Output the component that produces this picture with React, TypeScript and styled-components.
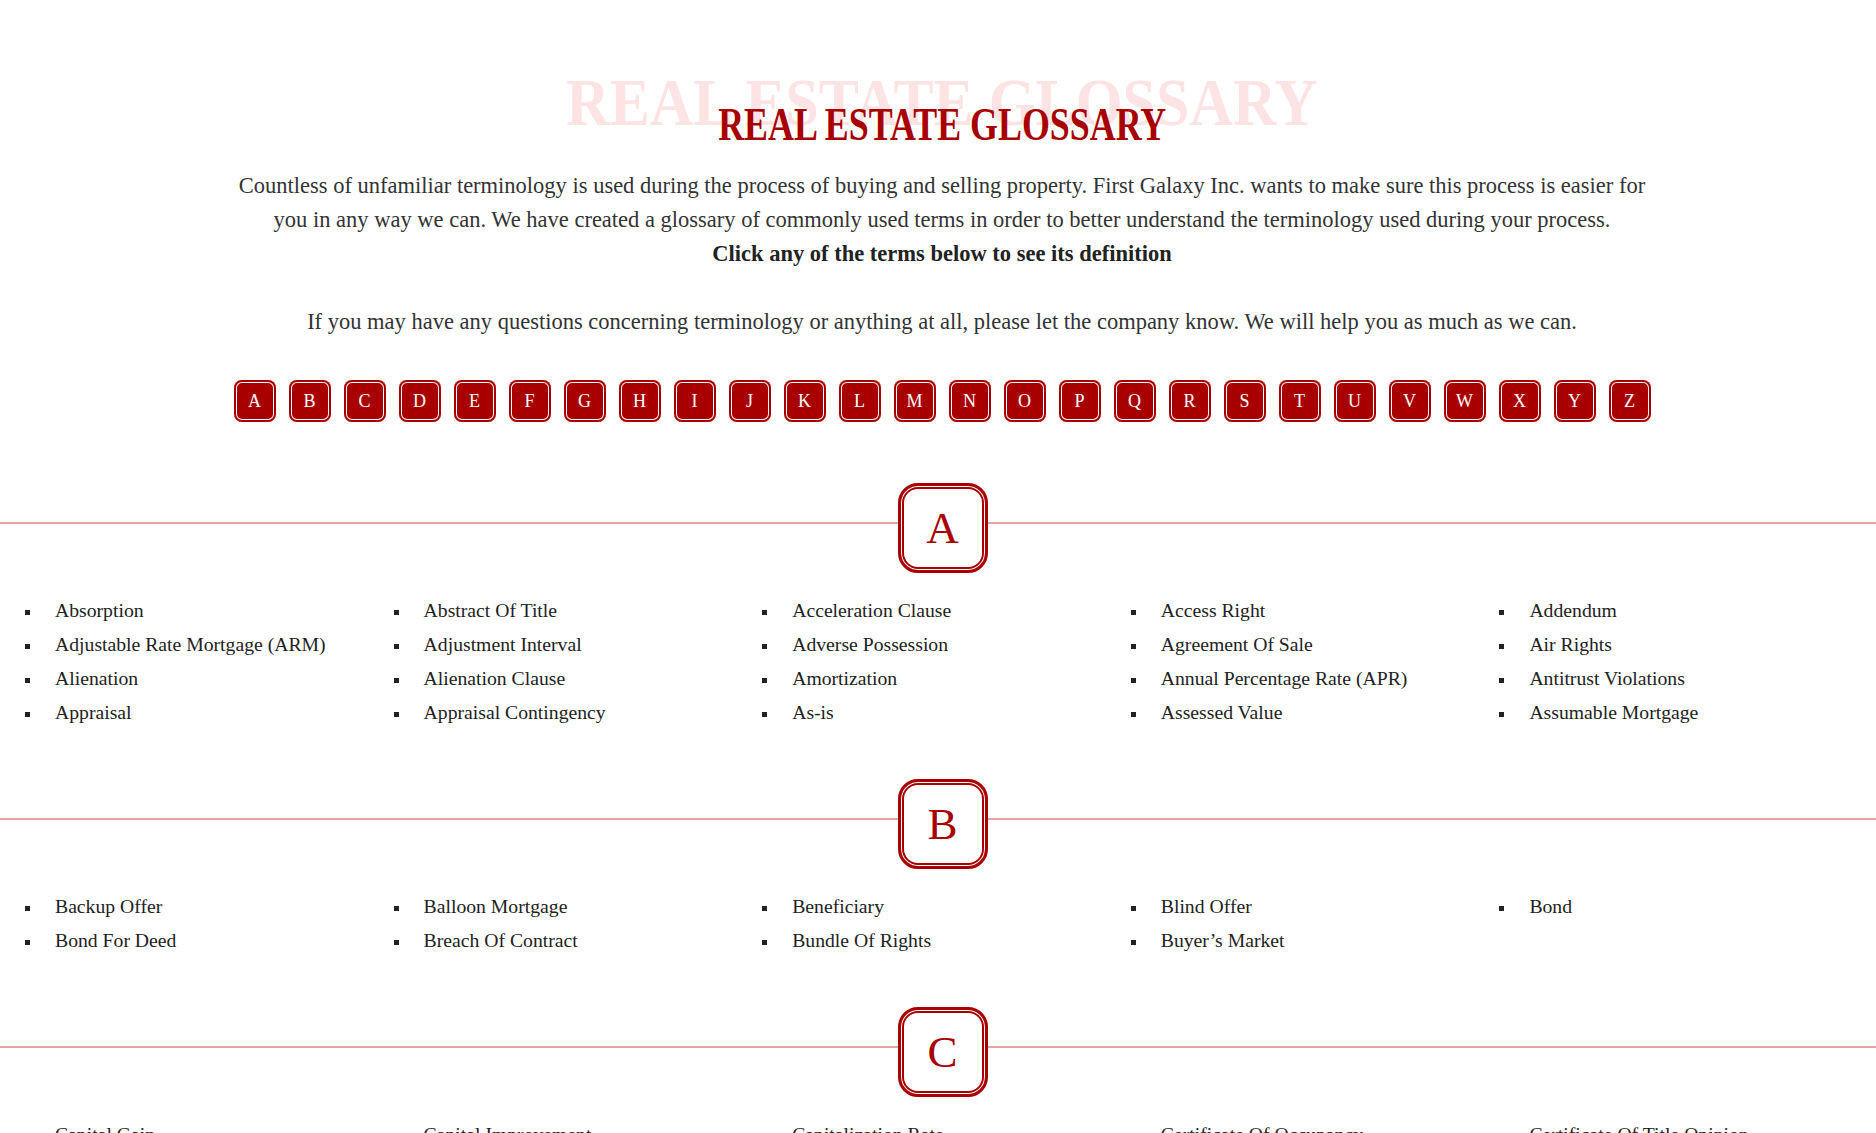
import React from "react";
import styled, { createGlobalStyle } from "styled-components";

const RED = "#a80000";

const GlobalStyle = createGlobalStyle`
  html, body {
    margin: 0;
    padding: 0;
    background: #ffffff;
  }
  body {
    font-family: "Liberation Serif", "Times New Roman", serif;
    color: #333;
  }
  * { box-sizing: border-box; }
`;

const Page = styled.div`
  width: 100%;
  padding-bottom: 60px;
`;

const Header = styled.header`
  padding: 99px 0 0 8px;
  text-align: center;
`;

const TitleWrap = styled.div`
  position: relative;
  height: 52px;
`;

const GhostTitle = styled.span`
  position: absolute;
  left: 0;
  right: 0;
  top: -31px;
  font-size: 68px;
  line-height: 68px;
  font-weight: 700;
  color: #fde3e3;
  white-space: nowrap;
  transform: scaleX(0.885);
  z-index: 0;
`;

const Title = styled.h1`
  position: relative;
  z-index: 1;
  display: inline-block;
  margin: 0;
  font-size: 46px;
  line-height: 52px;
  font-weight: 700;
  color: ${RED};
  white-space: nowrap;
  transform: scaleX(0.78);
`;

const Intro = styled.p`
  max-width: 1415px;
  margin: 18px auto 0;
  font-size: 22.5px;
  line-height: 34px;
  color: #333;
`;

const Strong = styled.strong`
  display: block;
  font-weight: 700;
  color: #222;
`;

const Note = styled(Intro)`
  max-width: 1500px;
  margin-top: 34px;
`;

const LetterBar = styled.nav`
  display: flex;
  justify-content: center;
  gap: 13px;
  margin-top: 41px;
`;

const LetterButton = styled.a`
  width: 42px;
  height: 42px;
  display: flex;
  align-items: center;
  justify-content: center;
  border-radius: 8px;
  background: ${RED};
  box-shadow: inset 0 0 0 2px ${RED}, inset 0 0 0 3px #ffffff;
  color: #ffffff;
  font-size: 18px;
  text-decoration: none;
  cursor: pointer;
`;

const Sections = styled.main`
  display: flex;
  flex-direction: column;
  gap: 50px;
  margin-top: 61px;
`;

const Section = styled.section``;

const Divider = styled.div`
  position: relative;
  display: flex;
  justify-content: center;
  padding-left: 9px;
  &::before {
    content: "";
    position: absolute;
    left: 0;
    right: 0;
    top: 39px;
    height: 2px;
    background: #e4a4a4;
  }
`;

const Badge = styled.div`
  position: relative;
  z-index: 1;
  width: 90px;
  height: 90px;
  display: flex;
  align-items: center;
  justify-content: center;
  background: #ffffff;
  border: 3px solid ${RED};
  border-radius: 20px;
  box-shadow: inset 0 0 0 1px #ffffff, inset 0 0 0 3px ${RED};
  color: ${RED};
  font-size: 45px;
  line-height: 1;
`;

const TermGrid = styled.ul`
  list-style: none;
  margin: 20px 0 0;
  padding: 0 18px 0 15px;
  display: grid;
  grid-template-columns: repeat(5, 1fr);
`;

const Term = styled.li`
  font-size: 19.7px;
  line-height: 34px;
  color: #222;
  white-space: nowrap;
  cursor: pointer;
  &::before {
    content: "";
    display: inline-block;
    width: 5px;
    height: 5px;
    background: #222;
    vertical-align: middle;
    margin: 0 25px 0 10px;
  }
`;

const LETTERS = "ABCDEFGHIJKLMNOPQRSTUVWXYZ".split("");

const GLOSSARY: { letter: string; terms: string[] }[] = [
  {
    letter: "A",
    terms: [
      "Absorption",
      "Abstract Of Title",
      "Acceleration Clause",
      "Access Right",
      "Addendum",
      "Adjustable Rate Mortgage (ARM)",
      "Adjustment Interval",
      "Adverse Possession",
      "Agreement Of Sale",
      "Air Rights",
      "Alienation",
      "Alienation Clause",
      "Amortization",
      "Annual Percentage Rate (APR)",
      "Antitrust Violations",
      "Appraisal",
      "Appraisal Contingency",
      "As-is",
      "Assessed Value",
      "Assumable Mortgage",
    ],
  },
  {
    letter: "B",
    terms: [
      "Backup Offer",
      "Balloon Mortgage",
      "Beneficiary",
      "Blind Offer",
      "Bond",
      "Bond For Deed",
      "Breach Of Contract",
      "Bundle Of Rights",
      "Buyer\u2019s Market",
    ],
  },
  {
    letter: "C",
    terms: [
      "Capital Gain",
      "Capital Improvement",
      "Capitalization Rate",
      "Certificate Of Occupancy",
      "Certificate Of Title Opinion",
      "Chain Of Title",
      "Clear Title",
      "Closing",
      "Closing Costs",
      "Cloud On Title",
    ],
  },
];

export default function App() {
  return (
    <Page>
      <GlobalStyle />
      <Header>
        <TitleWrap>
          <GhostTitle aria-hidden="true">REAL ESTATE GLOSSARY</GhostTitle>
          <Title>REAL ESTATE GLOSSARY</Title>
        </TitleWrap>
        <Intro>
          Countless of unfamiliar terminology is used during the process of buying and selling
          property. First Galaxy Inc. wants to make sure this process is easier for you in any way
          we can. We have created a glossary of commonly used terms in order to better understand
          the terminology used during your process.
          <Strong>Click any of the terms below to see its definition</Strong>
        </Intro>
        <Note>
          If you may have any questions concerning terminology or anything at all, please let the
          company know. We will help you as much as we can.
        </Note>
        <LetterBar>
          {LETTERS.map((l) => (
            <LetterButton key={l} href={`#letter-${l}`}>
              {l}
            </LetterButton>
          ))}
        </LetterBar>
      </Header>
      <Sections>
        {GLOSSARY.map((group) => (
          <Section key={group.letter} id={`letter-${group.letter}`}>
            <Divider>
              <Badge>{group.letter}</Badge>
            </Divider>
            <TermGrid>
              {group.terms.map((t) => (
                <Term key={t}>{t}</Term>
              ))}
            </TermGrid>
          </Section>
        ))}
      </Sections>
    </Page>
  );
}
